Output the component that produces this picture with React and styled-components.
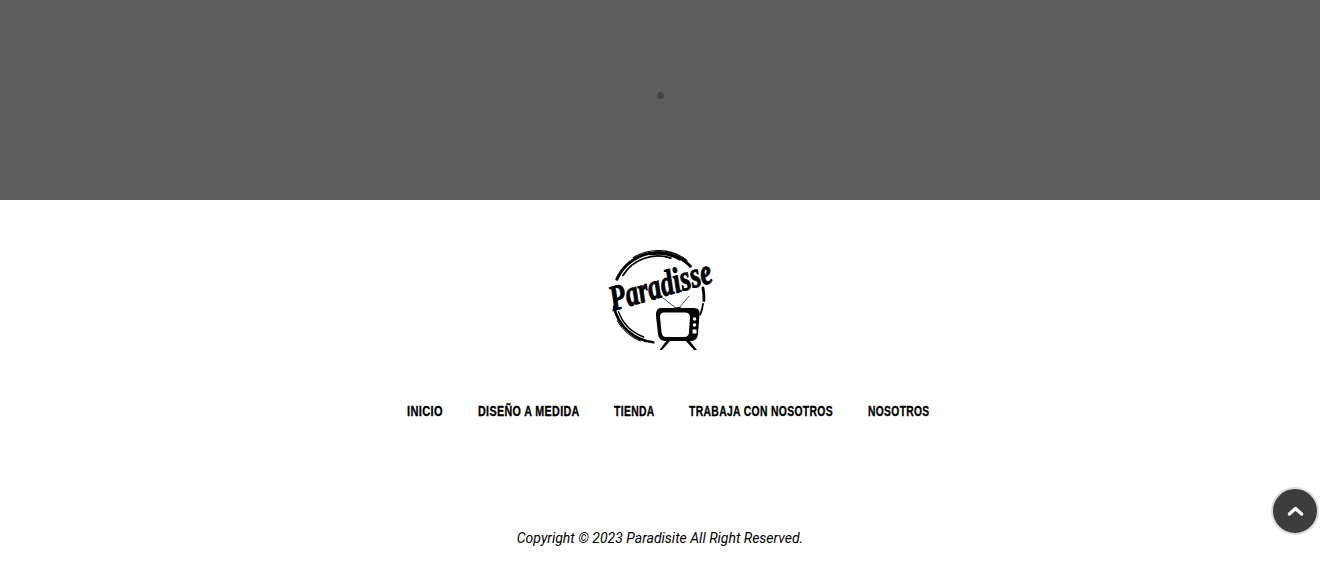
import React from 'react'
import styled, { createGlobalStyle } from 'styled-components'

const GlobalStyle = createGlobalStyle`
  html, body {
    margin: 0;
    padding: 0;
    background: #fff;
    overflow: hidden;
  }
`

// the reference uses a condensed face, so the widths are squeezed by hand
const navLinks = [
  { label: 'INICIO', width: 36, scale: 0.735 },
  { label: 'DISEÑO A MEDIDA', width: 101, scale: 0.715 },
  { label: 'TIENDA', width: 40, scale: 0.69 },
  { label: 'TRABAJA CON NOSOTROS', width: 144, scale: 0.69 },
  { label: 'NOSOTROS', width: 62, scale: 0.685 },
]

// brush strokes of the logo ring: radius, start and end angle, stroke width
const ringStrokes = [
  [45, -156, -44, 3],
  [41.5, -148, -72, 1.8],
  [47, -122, -52, 1.2],
  [43.5, -100, -60, 1.4],
  [45, 168, 96, 2.6],
  [42, 160, 110, 1.5],
  [47, 150, 112, 1],
  [46, -12, 4, 2.8],
  [45.5, 8, 22, 1.8],
]

const arc = (r, from, to) => {
  const toXY = (a) => {
    const rad = (a * Math.PI) / 180
    return `${(49 + r * Math.cos(rad)).toFixed(2)} ${(47.5 + r * Math.sin(rad)).toFixed(2)}`
  }
  const sweep = to > from ? 1 : 0
  return `M${toXY(from)} A${r} ${r} 0 0 ${sweep} ${toXY(to)}`
}

const Logo = () => (
  <LogoSvg viewBox="0 0 102 100" aria-label="Paradisse">
    <g fill="none" stroke="#000" strokeLinecap="round">
      {ringStrokes.map(([r, from, to, w]) => (
        <path key={`${r}${from}`} d={arc(r, from, to)} strokeWidth={w} />
      ))}
      <path d="M54 48 L67 58" strokeWidth="0.7" />
      <path d="M80 46 L70 58" strokeWidth="0.7" />
    </g>
    <LogoText
      transform="translate(4 61) rotate(-16)"
      textLength="105"
      lengthAdjust="spacingAndGlyphs"
    >
      Paradisse
    </LogoText>
    <path d="M63 59 Q69 55 75 59 Z" fill="#000" />
    <path
      d="M52 58 H85 Q91 58 90.500 64 L89 84 Q88.500 91 82 91 H56 Q50 91 49 84 L47 66 Q46.500 58 52 58 Z"
      fill="#000"
    />
    <path
      d="M55 62.500 H76 Q81 62.500 81 67 L80 82 Q80 87 75 87 H57 Q53 87 52.500 82 L51 67 Q51 62.500 55 62.500 Z"
      fill="#fff"
    />
    <circle cx="85.500" cy="69" r="1.800" fill="#fff" />
    <circle cx="85.500" cy="75" r="1.800" fill="#fff" />
    <rect x="83.500" y="79.500" width="4" height="4" fill="#fff" />
    <path d="M58 90 L50.500 100 H53 L62 90 Z M76 90 L85 100 H88 L80 90 Z" fill="#000" />
  </LogoSvg>
)

const App = () => {
  return (
    <>
      <GlobalStyle />
      <Page>
        <Hero>
          <HeroDot />
        </Hero>
        <Footer>
          <LogoLink href="#">
            <Logo />
          </LogoLink>
          <Nav>
            {navLinks.map((link) => (
              <NavLink href="#" key={link.label} $width={link.width}>
                <NavLabel $scale={link.scale}>{link.label}</NavLabel>
              </NavLink>
            ))}
          </Nav>
          <Copyright>Copyright © 2023 Paradisite All Right Reserved.</Copyright>
        </Footer>
        <ScrollTop aria-label="Volver arriba">
          <svg width="17" height="11" viewBox="0 0 17 11">
            <path
              d="M2.400 8 L8.500 2.600 L14.600 8"
              fill="none"
              stroke="#fff"
              strokeWidth="3.400"
              strokeLinecap="round"
              strokeLinejoin="round"
            />
          </svg>
        </ScrollTop>
      </Page>
    </>
  )
}

export default App

const Page = styled.div`
  display: flex;
  flex-direction: column;
  min-height: 565px;
  background: #fff;
`

const Hero = styled.section`
  display: flex;
  justify-content: center;
  height: 200px;
  padding-top: 92px;
  box-sizing: border-box;
  background: #5e5e5e;
`

const HeroDot = styled.span`
  width: 7px;
  height: 7px;
  border-radius: 50%;
  background: #444;
`

const Footer = styled.footer`
  display: flex;
  flex-direction: column;
  align-items: center;
  padding-top: 50px;
`

const LogoLink = styled.a`
  display: block;
  width: 102px;
  height: 100px;
`

const LogoSvg = styled.svg`
  display: block;
  width: 102px;
  height: 100px;
  overflow: visible;
`

const LogoText = styled.text`
  font-family: "Liberation Serif", serif;
  font-size: 36px;
  font-weight: 700;
  font-style: italic;
  fill: #000;
  stroke: #000;
  stroke-width: 1px;
`

const Nav = styled.nav`
  display: flex;
  gap: 35px;
  margin-top: 51px;
  padding-left: 17px;
`

const NavLink = styled.a`
  display: block;
  width: ${(props) => props.$width}px;
  font-family: "Liberation Sans", sans-serif;
  font-size: 15px;
  line-height: 20px;
  font-weight: 700;
  letter-spacing: 0.5px;
  color: #000;
  text-decoration: none;
  white-space: nowrap;
`

const NavLabel = styled.span`
  display: inline-block;
  transform: scaleX(${(props) => props.$scale});
  transform-origin: left center;
  -webkit-text-stroke: 0.35px #000;
`

const Copyright = styled.p`
  margin: 107px 0 0;
  font-family: Roboto, sans-serif;
  font-size: 14px;
  line-height: 20px;
  font-style: italic;
  color: #000;
`

const ScrollTop = styled.button`
  position: fixed;
  left: 1271px;
  top: 487px;
  display: flex;
  align-items: center;
  justify-content: center;
  width: 48px;
  height: 48px;
  padding: 0;
  border-radius: 50%;
  border: 2px solid #dcdcdc;
  background: #3d3d3d;
  box-sizing: border-box;
`
